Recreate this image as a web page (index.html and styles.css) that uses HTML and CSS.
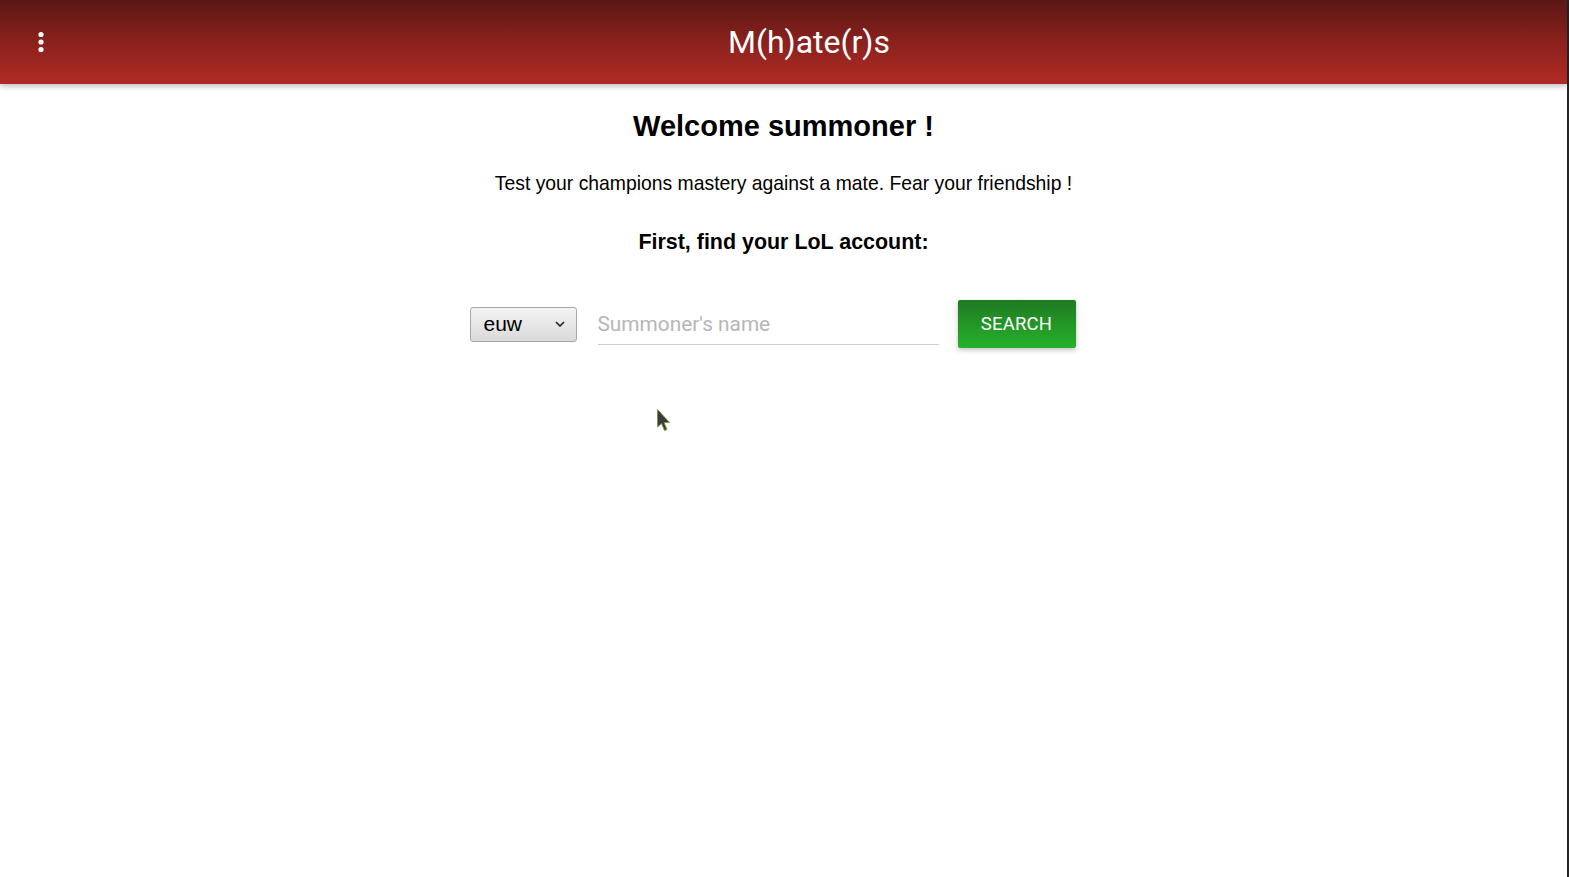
FILE: index.html
```html
<!DOCTYPE html>
<html lang="en">
<head>
<meta charset="utf-8">
<title>M(h)ate(r)s</title>
<link rel="stylesheet" href="styles.css">
</head>
<body>
<div class="app">
  <header class="topbar">
    <button class="menu-btn" aria-label="Menu">
      <svg width="8" height="24" viewBox="0 0 8 24"><circle cx="4" cy="4.5" r="2.6" fill="#fff"/><circle cx="4" cy="12" r="2.6" fill="#fff"/><circle cx="4" cy="19.5" r="2.6" fill="#fff"/></svg>
    </button>
    <div class="brand">M(h)ate(r)s</div>
  </header>
  <main class="content">
    <h1 class="welcome">Welcome summoner !</h1>
    <p class="tagline">Test your champions mastery against a mate. Fear your friendship !</p>
    <h2 class="find">First, find your LoL account:</h2>
    <form class="search-row" onsubmit="return false">
      <div class="region-select">
        <span class="region-value">euw</span>
        <svg class="chev" width="10" height="6" viewBox="0 0 10 6"><path d="M1 1 L5 5 L9 1" fill="none" stroke="#222" stroke-width="1.6"/></svg>
      </div>
      <input class="name-input" type="text" placeholder="Summoner's name">
      <button class="search-btn" type="submit">SEARCH</button>
    </form>
    <svg class="cursor" width="16" height="26" viewBox="0 0 16 26"><path d="M1.5 1.5 L1.5 19 L5.5 15.5 L8.5 22.5 L11 21.5 L8 14.5 L13.5 14.5 Z" fill="#3b3b3b" stroke="#7a9a4a" stroke-width="1"/></svg>
  </main>
</div>
<div class="edge"></div>
</body>
</html>
```

FILE: styles.css
```css
html, body {
  margin: 0;
  padding: 0;
  height: 100%;
}
body {
  display: flex;
  background: #fff;
  font-family: "Liberation Sans", Arial, sans-serif;
  color: #000;
  overflow: hidden;
}
.app {
  flex: 1;
  display: flex;
  flex-direction: column;
  min-width: 0;
}
.edge {
  width: 2px;
  background: #262626;
  flex: none;
}
.topbar {
  height: 84px;
  flex: none;
  display: flex;
  align-items: center;
  background: linear-gradient(to bottom, #5b1714 0%, #8a211d 50%, #b12b25 100%);
  box-shadow: 0 2px 6px rgba(0, 0, 0, 0.28);
  position: relative;
  z-index: 1;
}
.menu-btn {
  width: 82px;
  height: 84px;
  padding: 0;
  border: 0;
  background: transparent;
  display: flex;
  align-items: center;
  justify-content: center;
  cursor: pointer;
}
.brand {
  flex: 1;
  text-align: center;
  padding-right: 31px;
  font-family: Roboto, "Noto Sans", sans-serif;
  font-size: 32px;
  color: #fff;
  line-height: 40px;
}
.content {
  flex: 1;
  display: flex;
  flex-direction: column;
  align-items: center;
  position: relative;
}
.welcome {
  margin: 25px 0 0;
  font-size: 29px;
  line-height: 35px;
  font-weight: bold;
}
.tagline {
  margin: 28px 0 0;
  font-size: 19.35px;
  line-height: 22px;
}
.find {
  margin: 36px 0 0;
  font-size: 21.45px;
  line-height: 25px;
  font-weight: bold;
}
.search-row {
  margin: 45px 0 0;
  display: flex;
  align-items: center;
  padding-right: 22px;
}
.region-select {
  width: 107px;
  height: 35px;
  box-sizing: border-box;
  border: 1px solid #a8a8a8;
  border-radius: 3px;
  background: linear-gradient(to bottom, #f3f3f3, #dadada);
  display: flex;
  align-items: center;
  justify-content: space-between;
  padding: 0 11px 0 13px;
  font-size: 21px;
}
.region-value {
  line-height: 24px;
}
.chev {
  width: 10px;
  height: 6px;
}
.name-input {
  margin-left: 21px;
  width: 341px;
  height: 42px;
  box-sizing: border-box;
  border: 0;
  border-bottom: 1px solid #cfcfcf;
  outline: none;
  padding: 0;
  font-family: Roboto, "Noto Sans", sans-serif;
  font-size: 20.8px;
  color: #222;
  background: transparent;
}
.name-input::placeholder {
  color: #b6b6b6;
}
.search-btn {
  margin-left: 19px;
  width: 118px;
  height: 48px;
  border: 0;
  border-radius: 2px;
  background: linear-gradient(to bottom, #1e7a22, #27b12c);
  box-shadow: 0 2px 5px rgba(0, 0, 0, 0.25);
  color: #fff;
  font-family: Roboto, "Noto Sans", sans-serif;
  font-size: 18.5px;
  letter-spacing: 0.2px;
  cursor: pointer;
}
.cursor {
  position: absolute;
  left: 656px;
  top: 324px;
}
```
